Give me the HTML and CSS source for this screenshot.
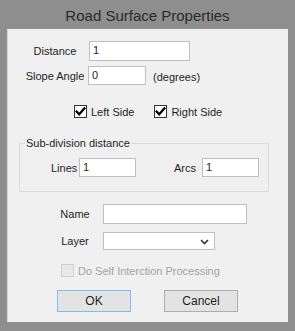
FILE: index.html
```html
<!DOCTYPE html>
<html>
<head>
<meta charset="utf-8">
<link rel="stylesheet" href="styles.css">
</head>
<body>
<div class="window">
  <div class="titlebar">Road Surface Properties</div>
  <div class="client">
    <div class="row row-distance">
      <span class="lbl">Distance</span>
      <span class="input w-distance">1</span>
    </div>
    <div class="row row-slope">
      <span class="lbl">Slope Angle</span>
      <span class="input w-slope">0</span>
      <span class="unit">(degrees)</span>
    </div>
    <div class="row row-checks">
      <span class="check left-check"><span class="box"><svg viewBox="0 0 13 13" width="13" height="13"><path d="M2.6 6.6 L5.2 9.3 L10.4 3.4" fill="none" stroke="#000" stroke-width="2.2" stroke-linecap="square"/></svg></span><span class="clbl">Left Side</span></span>
      <span class="check right-check"><span class="box"><svg viewBox="0 0 13 13" width="13" height="13"><path d="M2.6 6.6 L5.2 9.3 L10.4 3.4" fill="none" stroke="#000" stroke-width="2.2" stroke-linecap="square"/></svg></span><span class="clbl">Right Side</span></span>
    </div>
    <div class="group">
      <span class="legend">Sub-division distance</span>
      <div class="group-row">
        <span class="lbl-lines">Lines</span>
        <span class="input w-small">1</span>
        <span class="lbl-arcs">Arcs</span>
        <span class="input w-small">1</span>
      </div>
    </div>
    <div class="row row-name">
      <span class="lbl2">Name</span>
      <span class="input w-name"></span>
    </div>
    <div class="row row-layer">
      <span class="lbl2">Layer</span>
      <span class="input select"><svg class="chev" viewBox="0 0 9 6" width="9" height="6"><path d="M1 1 L4.5 4.5 L8 1" fill="none" stroke="#333" stroke-width="1.6"/></svg></span>
    </div>
    <div class="row row-self">
      <span class="check disabled"><span class="box"></span><span class="clbl">Do Self Interction Processing</span></span>
    </div>
    <div class="row row-buttons">
      <span class="btn btn-ok">OK</span>
      <span class="btn btn-cancel">Cancel</span>
    </div>
  </div>
</div>
</body>
</html>
```
FILE: styles.css
```css
html, body {
  margin: 0;
  padding: 0;
}
body {
  width: 295px;
  height: 331px;
  overflow: hidden;
  font-family: "Liberation Sans", Arial, sans-serif;
  font-size: 11px;
  color: #1e1e1e;
}
.window {
  width: 295px;
  height: 331px;
  box-sizing: border-box;
  background: #8e8e8e;
  display: flex;
  flex-direction: column;
  padding: 0 7px 9px 7px;
}
.titlebar {
  height: 29px;
  flex: none;
  display: flex;
  align-items: center;
  justify-content: center;
  font-size: 15px;
  color: #2a2a2a;
  padding-top: 2px;
  box-sizing: border-box;
}
.client {
  flex: 1;
  background: #f0f0f0;
  border-left: 1px solid #d8d8d8;
  box-sizing: border-box;
  display: flex;
  flex-direction: column;
}
.row {
  display: flex;
  align-items: center;
}
.lbl {
  width: 62px;
  margin-left: 16px;
  text-align: center;
  white-space: nowrap;
}
.input {
  display: block;
  box-sizing: border-box;
  background: #fff;
  border: 1px solid #bfbfbf;
  padding: 0 3px;
  line-height: 17px;
  white-space: nowrap;
  position: relative;
}
.row-distance {
  margin-top: 12px;
  height: 20px;
}
.row-distance .lbl {
  margin-right: 3px;
}
.w-distance {
  width: 101px;
  height: 20px;
}
.row-slope {
  margin-top: 5px;
  height: 19px;
}
.row-slope .lbl {
  margin-right: 2px;
}
.w-slope {
  width: 58px;
  height: 19px;
  line-height: 16px;
}
.unit {
  margin-left: 7px;
  margin-top: 2px;
}
.row-checks {
  margin-top: 20px;
  height: 13px;
}
.check {
  display: flex;
  align-items: center;
}
.box {
  width: 13px;
  height: 13px;
  box-sizing: border-box;
  border: 1px solid #333;
  background: #fff;
  display: block;
  position: relative;
}
.box svg {
  position: absolute;
  left: -1px;
  top: -1px;
}
.clbl {
  margin-left: 4px;
  white-space: nowrap;
}
.left-check {
  margin-left: 66px;
}
.right-check {
  margin-left: 20px;
}
.group {
  margin: 25px 0 0 11px;
  width: 250px;
  height: 49px;
  box-sizing: border-box;
  border: 1px solid #dcdcdc;
  position: relative;
}
.legend {
  position: absolute;
  left: 5px;
  top: -8px;
  background: #f0f0f0;
  padding: 0 1px;
  line-height: 14px;
}
.group-row {
  display: flex;
  align-items: center;
  margin-top: 14px;
  height: 19px;
}
.lbl-lines {
  margin-left: 31px;
  width: 28px;
}
.lbl-arcs {
  margin-left: 38px;
  width: 28px;
}
.w-small {
  width: 57px;
  height: 19px;
  line-height: 16px;
}
.lbl2 {
  width: 40px;
  margin-left: 47px;
  margin-right: 8px;
  text-align: center;
}
.row-name {
  margin-top: 12px;
  height: 20px;
}
.w-name {
  width: 144px;
  height: 20px;
}
.row-layer {
  margin-top: 8px;
  height: 18px;
}
.select {
  width: 112px;
  height: 18px;
}
.chev {
  position: absolute;
  right: 5px;
  top: 6px;
}
.row-self {
  margin-top: 14px;
  height: 13px;
}
.disabled {
  margin-left: 53px;
}
.disabled .box {
  border-color: #cfcfcf;
  background: #e8e8e8;
}
.disabled .clbl {
  color: #a3a3a3;
  margin-left: 4px;
}
.row-buttons {
  margin-top: 13px;
  height: 22px;
}
.btn {
  display: flex;
  align-items: center;
  justify-content: center;
  width: 74px;
  height: 22px;
  box-sizing: border-box;
  background: #e3e3e3;
  border: 1px solid #adadad;
  font-size: 12px;
}
.btn-ok {
  margin-left: 49px;
  border-color: #88b9e8;
  box-shadow: inset 0 0 0 1px #d6e8f8;
}
.btn-cancel {
  margin-left: 33px;
}
```
